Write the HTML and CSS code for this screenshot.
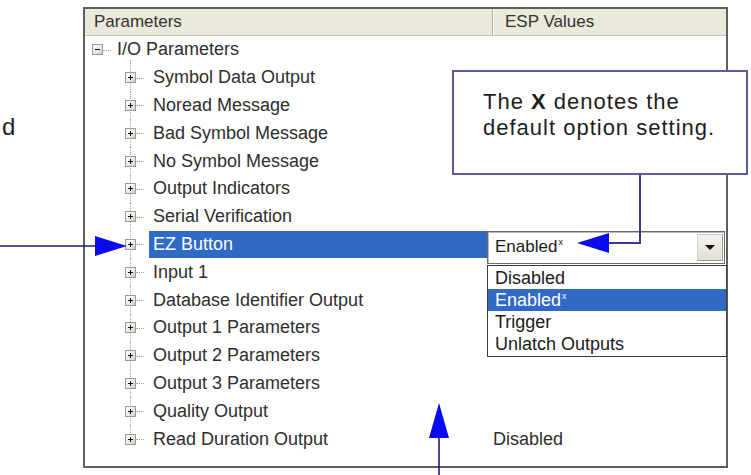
FILE: index.html
```html
<!DOCTYPE html>
<html>
<head>
<meta charset="utf-8">
<title>ESP Parameters</title>
<link rel="stylesheet" href="styles.css">
</head>
<body>
<div class="page">
  <div class="gutter"><span class="frag">d</span></div>
  <div class="panel">
    <div class="head">
      <div class="hcell hname">Parameters</div>
      <div class="hcell hval">ESP Values</div>
    </div>
    <div class="tree">
      <div class="row root">
        <div class="name"><span class="twig"><span class="box"></span></span><span class="label">I/O Parameters</span></div>
        <div class="val"></div>
      </div>
      <div class="row child first">
        <div class="name"><span class="twig"><span class="box plus"></span></span><span class="label">Symbol Data Output</span></div>
        <div class="val"></div>
      </div>
      <div class="row child">
        <div class="name"><span class="twig"><span class="box plus"></span></span><span class="label">Noread Message</span></div>
        <div class="val"></div>
      </div>
      <div class="row child">
        <div class="name"><span class="twig"><span class="box plus"></span></span><span class="label">Bad Symbol Message</span></div>
        <div class="val"></div>
      </div>
      <div class="row child">
        <div class="name"><span class="twig"><span class="box plus"></span></span><span class="label">No Symbol Message</span></div>
        <div class="val"></div>
      </div>
      <div class="row child">
        <div class="name"><span class="twig"><span class="box plus"></span></span><span class="label">Output Indicators</span></div>
        <div class="val"></div>
      </div>
      <div class="row child">
        <div class="name"><span class="twig"><span class="box plus"></span></span><span class="label">Serial Verification</span></div>
        <div class="val"></div>
      </div>
      <div class="row child selected">
        <div class="name"><span class="twig"><span class="box plus"></span></span><span class="label">EZ Button</span></div>
        <div class="val editor">
          <div class="combo">
            <span class="combo-text">Enabled<sup class="mark">x</sup></span>
            <span class="combo-btn"><span class="tri"></span></span>
          </div>
          <ul class="list">
            <li class="opt">Disabled</li>
            <li class="opt on">Enabled<sup class="mark">x</sup></li>
            <li class="opt">Trigger</li>
            <li class="opt">Unlatch Outputs</li>
          </ul>
        </div>
      </div>
      <div class="row child">
        <div class="name"><span class="twig"><span class="box plus"></span></span><span class="label">Input 1</span></div>
        <div class="val"></div>
      </div>
      <div class="row child">
        <div class="name"><span class="twig"><span class="box plus"></span></span><span class="label">Database Identifier Output</span></div>
        <div class="val"></div>
      </div>
      <div class="row child">
        <div class="name"><span class="twig"><span class="box plus"></span></span><span class="label">Output 1 Parameters</span></div>
        <div class="val"></div>
      </div>
      <div class="row child">
        <div class="name"><span class="twig"><span class="box plus"></span></span><span class="label">Output 2 Parameters</span></div>
        <div class="val"></div>
      </div>
      <div class="row child">
        <div class="name"><span class="twig"><span class="box plus"></span></span><span class="label">Output 3 Parameters</span></div>
        <div class="val"></div>
      </div>
      <div class="row child">
        <div class="name"><span class="twig"><span class="box plus"></span></span><span class="label">Quality Output</span></div>
        <div class="val"></div>
      </div>
      <div class="row child last">
        <div class="name"><span class="twig"><span class="box plus"></span></span><span class="label">Read Duration Output</span></div>
        <div class="val">Disabled</div>
      </div>
    </div>
  </div>
  <div class="callout">
    <div class="cline">The <b>X</b> denotes the</div>
    <div class="cline">default option setting.</div>
  </div>
  <svg class="annot" width="751" height="475" viewBox="0 0 751 475">
    <path d="M0 246 H97" stroke="#1c1c6c" stroke-width="1.6" fill="none"/>
    <polygon points="95,236 127,246 95,256" fill="#0a0af0"/>
    <path d="M640 175 V243 H606" stroke="#3a3a96" stroke-width="2" fill="none"/>
    <polygon points="577,243 609,233 609,253" fill="#0a0af0"/>
    <path d="M439 436 V475" stroke="#1c1c6c" stroke-width="1.6" fill="none"/>
    <polygon points="439,403 429,438 449,438" fill="#0a0af0"/>
  </svg>
</div>
</body>
</html>
```

FILE: styles.css
```css
* { box-sizing: border-box; }

html, body {
  margin: 0;
  padding: 0;
  background: #ffffff;
}

.page {
  position: relative;
  width: 751px;
  height: 475px;
  display: flex;
  overflow: hidden;
  font-family: "Liberation Sans", Arial, sans-serif;
  color: #222;
}

.gutter {
  width: 83px;
  flex: none;
  padding-top: 113px;
  padding-left: 2px;
}

.frag {
  display: block;
  font-size: 24px;
  line-height: 28px;
  color: #222;
}

.panel {
  margin-top: 7px;
  width: 645px;
  height: 461px;
  border: 2px solid #5e5e5e;
  background: #ffffff;
  display: flex;
  flex-direction: column;
  color: #2e2e2e;
}

.head {
  display: grid;
  grid-template-columns: 407px 1fr;
  height: 27px;
  background: #ebe9da;
  border-bottom: 1px solid #c9c5b2;
  font-size: 17px;
  line-height: 26px;
  color: #333333;
}

.hname { padding-left: 9px; }

.hval {
  padding-left: 12px;
  border-left: 1px solid #b3b09c;
  box-shadow: inset 1px 0 0 #ffffff;
}

.tree {
  display: flex;
  flex-direction: column;
  font-size: 18px;
}

.row {
  display: grid;
  grid-template-columns: 402px 1fr;
  height: 27.8px;
}

.name {
  display: flex;
  align-items: stretch;
  min-width: 0;
}

.root .name { padding-left: 7px; }
.child .name { padding-left: 40px; }

.twig {
  position: relative;
  width: 11px;
  flex: none;
  display: flex;
  align-items: center;
}

.child .twig::before {
  content: "";
  position: absolute;
  left: 5px;
  top: 0;
  bottom: 0;
  border-left: 1px dotted #a9a9a9;
}

.child.first .twig::before { top: -4px; }
.child.last .twig::before { bottom: 50%; }

.twig::after {
  content: "";
  position: absolute;
  left: 11px;
  top: 50%;
  width: 8px;
  border-top: 1px dotted #a9a9a9;
}

.box {
  position: relative;
  width: 11px;
  height: 11px;
  border: 1px solid #9a9a9a;
  background: linear-gradient(135deg, #ffffff 0%, #ebe9e0 60%, #cfcbbd 100%);
}

.box::before {
  content: "";
  position: absolute;
  left: 2px;
  top: 4px;
  width: 5px;
  height: 1px;
  background: #111;
}

.box.plus::after {
  content: "";
  position: absolute;
  left: 4px;
  top: 2px;
  width: 1px;
  height: 5px;
  background: #111;
}

.label {
  display: flex;
  align-items: center;
  padding: 0 4px;
  margin-left: 10px;
  white-space: nowrap;
}

.child .label { margin-left: 13px; }

.selected .label {
  flex: 1;
  background: #316ac5;
  color: #ffffff;
}

.val {
  display: flex;
  align-items: center;
  padding-left: 6px;
}

.editor {
  position: relative;
  padding: 0;
}

.combo {
  position: absolute;
  left: 0;
  top: 0;
  width: 238px;
  height: 33px;
  background: #ffffff;
  border: 1px solid #6a6a6a;
  box-shadow: inset 1px 1px 0 #b9b9b9;
  display: flex;
  align-items: center;
  padding-left: 7px;
  font-size: 17px;
  color: #1a1a1a;
}

.combo-text { flex: 1; }

.mark {
  font-size: 9px;
  line-height: 0;
  vertical-align: 7px;
  margin-left: 1px;
}

.combo-btn {
  position: absolute;
  right: 1px;
  top: 2px;
  width: 26px;
  height: 27px;
  background: linear-gradient(180deg, #f4f3ee 0%, #e3e0d3 100%);
  border: 1px solid #d4d0c4;
  border-bottom-color: #9d9a8e;
  border-right-color: #9d9a8e;
  display: flex;
  align-items: center;
  justify-content: center;
}

.tri {
  width: 0;
  height: 0;
  border-left: 5px solid transparent;
  border-right: 5px solid transparent;
  border-top: 5px solid #111;
}

.list {
  position: absolute;
  left: 0;
  top: 34.4px;
  width: 240px;
  height: 92px;
  margin: 0;
  padding: 1px 0 0 0;
  list-style: none;
  background: #ffffff;
  border: 1px solid #3a3a3a;
  font-size: 18px;
  color: #1a1a1a;
}

.opt {
  height: 22px;
  line-height: 22px;
  padding-left: 7px;
}

.opt.on {
  background: #316ac5;
  color: #ffffff;
}

.callout {
  position: absolute;
  left: 452px;
  top: 70px;
  width: 296px;
  height: 105px;
  border: 2px solid #5b5b9e;
  background: #ffffff;
  padding: 17px 0 0 29px;
  font-size: 22px;
  line-height: 25.5px;
  letter-spacing: 1px;
  color: #1e1e1e;
}

.cline { white-space: nowrap; }

.callout b { font-weight: bold; }

.annot {
  position: absolute;
  left: 0;
  top: 0;
  pointer-events: none;
}
```
